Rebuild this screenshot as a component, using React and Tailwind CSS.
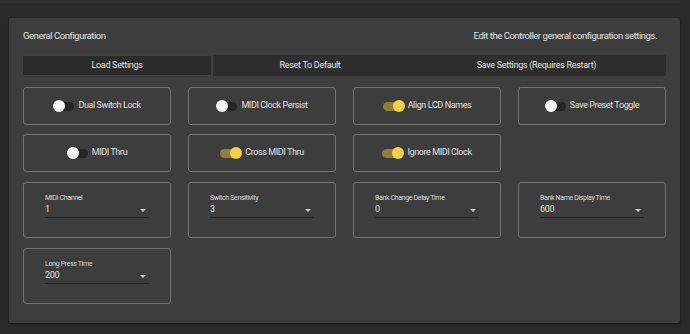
import React from 'react';

const toggles = [
  { label: 'Dual Switch Lock', on: false },
  { label: 'MIDI Clock Persist', on: false },
  { label: 'Align LCD Names', on: true },
  { label: 'Save Preset Toggle', on: false },
  { label: 'MIDI Thru', on: false },
  { label: 'Cross MIDI Thru', on: true },
  { label: 'Ignore MIDI Clock', on: true },
];

const selects = [
  { label: 'MIDI Channel', value: '1' },
  { label: 'Switch Sensitivity', value: '3' },
  { label: 'Bank Change Delay Time', value: '0' },
  { label: 'Bank Name Display Time', value: '600' },
  { label: 'Long Press Time', value: '200' },
];

function Toggle({ on }) {
  return (
    <div className="relative w-[22px] h-[12px] flex items-center">
      <div className={`w-[21px] h-[9px] rounded-full ${on ? 'bg-[#8f7d3c]' : 'bg-[#262626]'}`} />
      <div
        className={`absolute top-0 w-[12px] h-[12px] rounded-full ${on ? 'right-0 bg-[#f7cf48]' : 'left-0 bg-white'}`}
      />
    </div>
  );
}

export default function App() {
  return (
    <div className="w-[690px] h-[334px] bg-[#2a2a2a] text-[#e2e2e2] overflow-hidden" style={{ fontFamily: 'Roboto, "Liberation Sans", sans-serif' }}>
      <div className="w-[680px] h-[5px] bg-[#2f2f2f] border-b border-[#262626]" />
      <div className="ml-[9px] mt-[13px] w-[671px] h-[305px] bg-[#3d3d3d] rounded-[2px] shadow-[0_1px_2px_rgba(0,0,0,0.5)] px-[14px] pt-[12px]">
        <div className="flex justify-between items-center h-[13px] text-[9.5px] tracking-[-0.45px] pr-[9px]">
          <span>General Configuration</span>
          <span>Edit the Controller general configuration settings.</span>
        </div>

        {/* action bar */}
        <div className="mt-[12px] ml-[-1px] w-[644px] h-[21px] flex bg-[#2e2e2e] rounded-[2px] text-[9px] tracking-[-0.3px]">
          <button type="button" className="w-[190px] h-full bg-[#2b2b2b] border border-[#3f3f3f] rounded-l-[2px]">
            Load Settings
          </button>
          <button type="button" className="w-[195px] h-full border-l border-[#444]">
            Reset To Default
          </button>
          <button type="button" className="flex-1 h-full">
            Save Settings (Requires Restart)
          </button>
        </div>

        {/* toggles */}
        <div className="mt-[11px] grid grid-cols-4 gap-x-[17px] gap-y-[9px] w-[643px]">
          {toggles.map((t) => (
            <div key={t.label} className="h-[38px] border border-[#727272] rounded-[3px] flex items-center justify-center gap-[3px] text-[9px] tracking-[-0.4px]">
              <Toggle on={t.on} />
              <span>{t.label}</span>
            </div>
          ))}
        </div>

        {/* selects */}
        <div className="mt-[10px] grid grid-cols-4 gap-x-[17px] gap-y-[10px] w-[643px]">
          {selects.map((s) => (
            <div key={s.label} className="h-[56px] border border-[#727272] rounded-[3px] pl-[21px] pt-[12px]">
              <div className="text-[7px] leading-[7px] tracking-[-0.35px] text-[#dcdcdc]">{s.label}</div>
              <div className="w-[104px] h-[15px] mt-[1px] border-b border-[#262626] flex items-center justify-between pr-[3px]">
                <span className="text-[9px] tracking-[-0.3px]">{s.value}</span>
                <span className="w-0 h-0 border-l-[3px] border-r-[3px] border-t-[3px] border-l-transparent border-r-transparent border-t-[#cfcfcf]" />
              </div>
            </div>
          ))}
        </div>
      </div>
    </div>
  );
}
